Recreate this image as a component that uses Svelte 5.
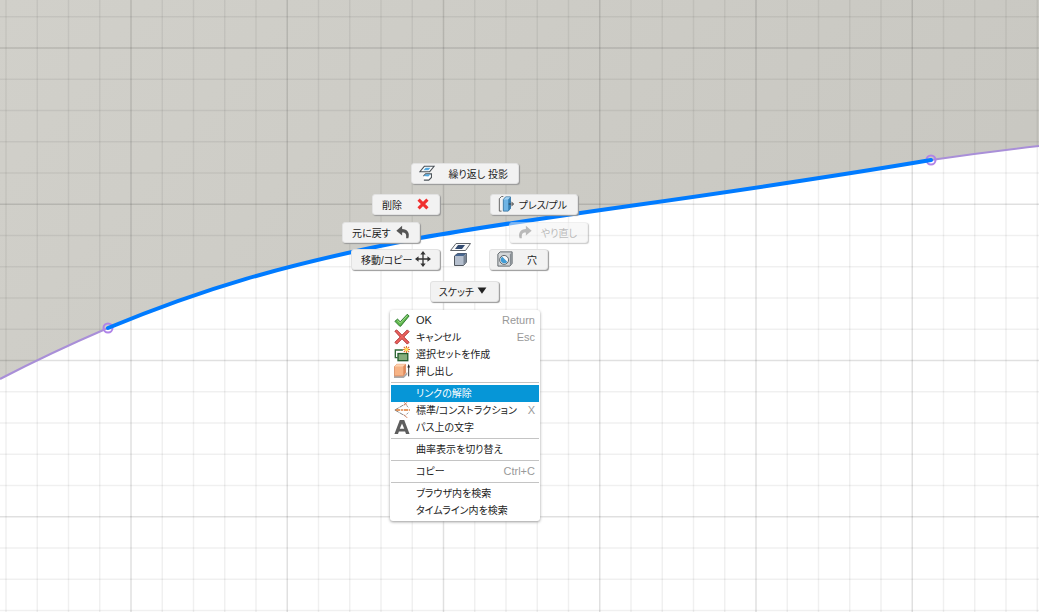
<script>
  // grid spacing and the first major line on each axis
  const step = 31.25;
  const originX = 131;
  const originY = 48;
  const range = Array.from({ length: 90 }, (_, i) => i - 5);

  const wheel = [
    { label: "繰り返し 投影", icon: "project", x: 411, y: 163, w: 108 },
    { label: "削除", icon: "delete", x: 372, y: 194, w: 68, after: true },
    { label: "プレス/プル", icon: "press", x: 490, y: 194, w: 88 },
    { label: "元に戻す", icon: "undo", x: 342, y: 222, w: 78, after: true },
    { label: "やり直し", icon: "redo", x: 509, y: 222, w: 79, disabled: true },
    { label: "移動/コピー", icon: "move", x: 351, y: 249, w: 89, after: true },
    { label: "穴", icon: "hole", x: 489, y: 249, w: 59 },
    { label: "スケッチ", icon: "down", x: 430, y: 281, w: 69, after: true },
  ];

  const groups = [
    [
      { label: "OK", icon: "ok", key: "Return", latin: true },
      { label: "キャンセル", icon: "cancel", key: "Esc" },
      { label: "選択セットを作成", icon: "set" },
      { label: "押し出し", icon: "extrude" },
    ],
    [
      { label: "リンクの解除" },
      { label: "標準/コンストラクション", icon: "construction", key: "X" },
      { label: "パス上の文字", icon: "text" },
    ],
    [{ label: "曲率表示を切り替え" }],
    [{ label: "コピー", key: "Ctrl+C" }],
    [{ label: "ブラウザ内を検索" }, { label: "タイムライン内を検索" }],
  ];

  let active = $state("リンクの解除");
</script>

{#snippet icon(name)}
  <svg class="icon" viewBox="0 0 18 18" aria-hidden="true">
    {#if name === "project"}
      <path d="M6 1.500H17L12 7.500H1Z" fill="#fff" stroke="#4a5157" stroke-width="1.200" />
      <path d="M7.500 3H13L10.500 6H5Z" fill="#54a9df" />
      <path d="M5 12.500L7.500 10H14V14L11 17H5.500" fill="#fff" stroke="#4a5157" stroke-width="1.200" />
      <path d="M5.500 12.500L7.500 10.500H13L10.500 13Z" fill="#54a9df" />
    {:else if name === "delete"}
      <path d="M4 4L14 14M14 4L4 14" stroke="#f0302f" stroke-width="3.500" />
    {:else if name === "press"}
      <path d="M6 0.500H4L1.500 3V17H4" fill="none" stroke="#555" />
      <path d="M6 4L8.500 1H14V14L11.500 17H6Z" fill="#6fb4e4" stroke="#3775a3" />
      <path d="M6.500 4L9 1.500H13.500L11.500 4Z" fill="#a5d2f0" />
      <path d="M11.500 4V17L14 14V1.500Z" fill="#367fb3" />
      <path d="M12 9H17M15 6.500L17.500 9L15 11.500" fill="none" stroke="#333" />
    {:else if name === "undo"}
      <path d="M8 2L1.500 7.500L8 13V9.500C12 9.500 13 11 12.500 16H15C17 10 14 5.500 8 5.500V2M5 7.500L6.500 6" fill="#555" />
    {:else if name === "redo"}
      <path d="M10 2L16.500 7.500L10 13V9.500C6 9.500 5 11 5.500 16H3C1 10 4 5.500 10 5.500Z" fill="#777" />
    {:else if name === "move"}
      <path d="M9 3V15M3 9H15" stroke="#333" stroke-width="1.500" />
      <path d="M9 0L12 4H6ZM9 18L6 14H12ZM0 9L4 6V12ZM18 9L14 12V6Z" fill="#333" />
    {:else if name === "hole"}
      <path d="M1 3.500L3.500 1H17V14L14.500 17H1Z" fill="#d3d6d8" stroke="#555b61" />
      <path d="M14.500 4V16.500L16.500 14V1.500Z" fill="#858c92" />
      <circle cx="8" cy="10" r="5" fill="#f8f8f8" stroke="#4c535a" />
      <path d="M6 6.500A4 4 0 1 0 11.500 12Z" fill="#419bd4" />
    {:else if name === "down"}
      <path d="M4 5H14L9 12Z" fill="#222" />
    {:else if name === "ok"}
      <path d="M1 10.500L4 8L7 11L15 2.500L17 4.500L7.500 16H6.500Z" fill="#63b84f" stroke="#217126" />
      <path d="M4 9.500L7 12.500L15 4" fill="none" stroke="#a6df92" />
    {:else if name === "cancel"}
      <path d="M1 2.500L3 1L9 7L15 1L17 3L11 9L17 15L15 17L9 11L3 17L1 15L7 9Z" fill="#ec625d" stroke="#a8272a" />
    {:else if name === "set"}
      <path d="M10 4.500H1.500V13H4" fill="none" stroke="#2f6837" stroke-width="1.500" />
      <rect x="4.500" y="8.500" width="11" height="8" fill="#85ad7c" stroke="#235c2c" stroke-width="1.500" />
      <path d="M14 0V8M10 4H18M11 1L17 7M17 1L11 7" stroke="#e27128" stroke-width="1.200" />
      <circle cx="14" cy="4" r="2" fill="#ffe15a" />
    {:else if name === "extrude"}
      <path d="M0 14V17H11L15 13V10L11 14Z" fill="#aaa" />
      <path d="M0.500 4L3 1.500H13V11L10.500 14.500H0.500Z" fill="#f7b486" stroke="#d98e65" />
      <path d="M0.500 4L3 1.500H13L10.500 4Z" fill="#ffd3b0" />
      <path d="M10.500 4V14L13 11V1.500Z" fill="#df8a5c" />
      <path d="M16.500 15V3" stroke="#222" />
      <path d="M15 5L16.500 1L18 5Z" fill="#222" />
    {:else if name === "construction"}
      <path d="M1 9L13 2M1 9L13 16" stroke="#777" fill="none" stroke-dasharray="5 1" />
      <path d="M2 9H18" stroke="#de7932" stroke-width="1.500" stroke-dasharray="5 1 2 1" />
      <path d="M11 0L15 4M15 0L11 4M11 14L15 18" stroke="#d6805a" />
      <path d="M14 4L16 6M14 14L16 12" stroke="#888" />
    {:else if name === "text"}
      <path d="M6.500 1H11.500L17.500 17H13.500L12.500 14H5.500L4.500 17H0.500ZM9 5L6.500 11H11.500Z" fill="#5e5e5e" fill-rule="evenodd" />
    {/if}
  </svg>
{/snippet}

<main class="canvas">
  <svg class="sketch" aria-hidden="true">
    <defs>
      <linearGradient id="face" x1="0" y1="0" x2="1" y2="0.300">
        <stop offset="0" stop-color="#d1d0ca" />
        <stop offset="1" stop-color="#c9c8c2" />
      </linearGradient>
    </defs>
    <path
      d="M0 0H1039V146Q985 152 931 160C700 199 560 213 420 238C280 265 200 290 108 328Q50 353 0 379Z"
      fill="url(#face)"
    />
    {#each range as n}
      <line class="grid" class:major={n % 5 === 0} x1={originX + n * step} x2={originX + n * step} y1="0" y2="100%" />
      <line class="grid" class:major={n % 5 === 0} x1="0" x2="100%" y1={originY + n * step} y2={originY + n * step} />
    {/each}
    <path class="edge" d="M0 379Q50 353 108 328M931 160Q985 152 1039 146" />
    <circle class="point" cx="108" cy="328" r="4.500" />
    <circle class="point" cx="931" cy="160" r="4.500" />
    <path class="curve" d="M108 328C200 290 280 265 420 238C560 213 700 199 931 160" />
  </svg>

  <div class="wheel">
    {#each wheel as item}
      <button
        class="tool"
        class:after={item.after}
        disabled={item.disabled}
        style="left: {item.x}px; top: {item.y}px; width: {item.w}px"
      >
        {@render icon(item.icon)}
        <span class="name">{item.label}</span>
      </button>
    {/each}
    <svg class="hub" viewBox="0 0 24 28" aria-hidden="true">
      <path d="M7 2.500H21.500L16.500 9.500H1.500Z" fill="#fafafa" stroke="#62676c" />
      <path d="M9 4H16L13 8H6Z" fill="#344c72" />
      <path d="M5.500 15L8.500 12.500H17.500V21L14.500 24.500H5.500Z" fill="#b5bfce" stroke="#50565e" />
      <path d="M5.500 15L8.500 12.500H17.500L14.500 15Z" fill="#46658f" />
      <path d="M14.500 15V24L17.500 21V13Z" fill="#798594" />
    </svg>
  </div>

  <div class="menu" role="menu">
    {#each groups as group, g}
      {#if g > 0}<div class="separator" role="separator"></div>{/if}
      {#each group as item}
        <button
          class="row"
          class:active={active === item.label}
          role="menuitem"
          onmouseenter={() => (active = item.label)}
        >
          <span class="slot">
            {#if item.icon}{@render icon(item.icon)}{/if}
          </span>
          <span class="name" class:latin={item.latin}>{item.label}</span>
          {#if item.key}<kbd>{item.key}</kbd>{/if}
        </button>
      {/each}
    {/each}
  </div>
</main>

<style>
  :global(body) {
    margin: 0;
  }
  .canvas {
    position: relative;
    min-height: 100vh;
    overflow: hidden;
    background: #fff;
    color: #222;
    font-family: "Liberation Sans", "Noto Sans CJK JP", sans-serif;
    font-size: 10px;
    font-feature-settings: "palt";
  }
  .sketch {
    position: absolute;
    width: 100%;
    height: 100%;
  }
  .grid {
    stroke: #000;
    stroke-opacity: 0.06;
    stroke-width: 1.5;
  }
  .grid.major {
    stroke-opacity: 0.12;
  }
  .edge {
    fill: none;
    stroke: #a98fd8;
    stroke-width: 2;
  }
  .point {
    fill: none;
    stroke: #b084e8;
    stroke-width: 2;
  }
  .curve {
    fill: none;
    stroke: #007bff;
    stroke-width: 4;
    stroke-linecap: round;
  }
  button {
    box-sizing: border-box;
    margin: 0;
    border: 0;
    font: inherit;
    color: inherit;
    white-space: nowrap;
  }
  .icon {
    width: 16px;
    height: 16px;
    flex: none;
  }
  .tool {
    position: absolute;
    display: flex;
    align-items: center;
    justify-content: space-between;
    height: 21px;
    padding: 0 10px 1px 7px;
    background: #f2f2f2;
    border: 1px solid #e2e2e2;
    border-radius: 3px;
    box-shadow: 1px 1px 1px #999;
  }
  .tool.after {
    flex-direction: row-reverse;
    padding: 0 8px 1px 9px;
  }
  .tool:disabled {
    opacity: 0.5;
    color: #777;
  }
  .hub {
    position: absolute;
    left: 449px;
    top: 241px;
    width: 24px;
    height: 28px;
  }
  .menu {
    position: absolute;
    left: 390px;
    top: 310px;
    box-sizing: border-box;
    width: 150px;
    padding: 2px 1px;
    background: #fff;
    border-radius: 3px;
    box-shadow: 0 1px 3px #999;
  }
  .row {
    display: flex;
    align-items: center;
    width: 100%;
    height: 17px;
    padding: 0 4px 2px 3px;
    background: none;
    text-align: left;
  }
  .row.active {
    background: #0696d7;
    color: #fff;
  }
  .slot {
    display: flex;
    width: 22px;
    flex: none;
  }
  .latin {
    font-size: 11px;
  }
  kbd {
    margin-left: auto;
    font-family: inherit;
    font-size: 11px;
    color: #999;
  }
  .separator {
    height: 1px;
    margin: 2px 0;
    background: #c4c4c4;
  }
</style>
